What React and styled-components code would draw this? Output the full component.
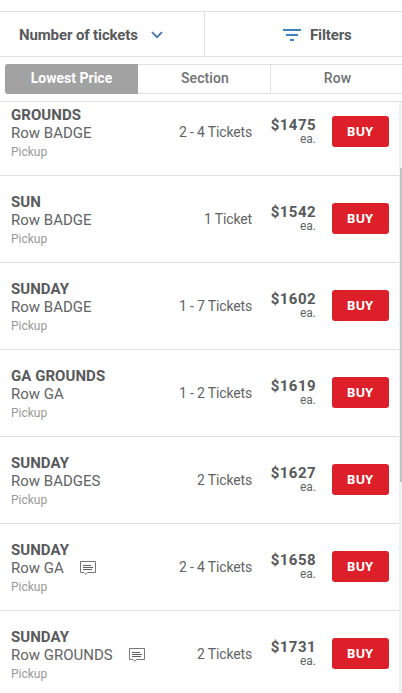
import React, { useState } from 'react';

import styled, { createGlobalStyle } from 'styled-components';


const GlobalStyle = createGlobalStyle`
  * {
    box-sizing: border-box;
  }

  body {
    margin: 0;
    background: #fff;
    font-family: Roboto, sans-serif;
    color: #626365;
    overflow: hidden;
  }
`;

const Page = styled.div`
  height: 693px;
  padding-top: 11px;
  display: flex;
  flex-direction: column;
  overflow: hidden;
`;

const Toolbar = styled.div`
  display: flex;
  flex: none;
  height: 46px;
  border-top: 1px solid #e0e0e0;
  border-bottom: 1px solid #e0e0e0;
`;

const ToolbarButton = styled.button`
  display: flex;
  align-items: center;
  flex: ${(props) => (props.$wide ? '0 0 205px' : '1')};
  gap: ${(props) => (props.$wide ? '13px' : '9px')};
  padding: 2px 0 0 ${(props) => (props.$wide ? '19px' : '78px')};
  border: none;
  border-right: ${(props) => (props.$wide ? '1px solid #e0e0e0' : 'none')};
  background: none;
  color: #58595c;
  font: 700 15px/20px Roboto, sans-serif;
  letter-spacing: -0.12px;
  cursor: pointer;
`;

const Tabs = styled.div`
  display: flex;
  flex: none;
  height: 30px;
  margin: 7px 0 7px 5px;
  border: 1px solid #e0e0e0;
  border-right: none;
  border-radius: 3px 0 0 3px;
`;

const Tab = styled.button`
  flex: 0 0 ${(props) => (props.$active ? '133px' : '132px')};
  margin: ${(props) => (props.$active ? '-1px 0 -1px -1px' : '0')};
  padding: 0 0 2px ${(props) => (props.$active ? '0' : '2px')};
  border: none;
  border-left: ${(props) => (props.$line ? '1px solid #e0e0e0' : 'none')};
  border-radius: ${(props) => (props.$active ? '3px 0 0 3px' : '0')};
  background: ${(props) => (props.$active ? '#a2a2a2' : '#fff')};
  color: ${(props) => (props.$active ? '#fff' : '#707173')};
  font: ${(props) => (props.$active ? 700 : 500)} 14px/20px Roboto, sans-serif;
  letter-spacing: ${(props) => (props.$active ? '0' : '0.1px')};
  cursor: pointer;
`;

const ListArea = styled.div`
  display: flex;
  flex: 1;
  min-height: 0;
  border-top: 1px solid #e0e0e0;
`;

const ListClip = styled.div`
  flex: 1;
  overflow: hidden;
`;

const List = styled.div`
  display: flex;
  flex-direction: column;
  margin-top: -13px;
`;

const ScrollTrack = styled.div`
  width: 3px;
  padding: 66px 0 0 1px;
  background: #f1f1f1;
`;

const ScrollThumb = styled.div`
  height: 314px;
  background: #c1c1c1;
`;

const Listing = styled.div`
  display: flex;
  flex: none;
  height: 87px;
  padding-left: 11px;
  border-bottom: 1px solid #e0e0e0;
`;

const Seat = styled.div`
  flex: 1;
  padding-top: 17px;
`;

const Section = styled.div`
  color: #58595b;
  font-size: 15px;
  font-weight: 700;
  line-height: 18px;
  letter-spacing: 0.05px;
`;

const RowName = styled.div`
  display: flex;
  align-items: center;
  gap: 16px;
  font-size: 15px;
  line-height: 18px;
`;

const Delivery = styled.div`
  margin-top: 2px;
  color: #999;
  font-size: 12px;
  line-height: 16px;
`;

const Quantity = styled.div`
  padding-top: 34px;
  font-size: 14px;
  line-height: 18px;
  letter-spacing: -0.15px;
`;

const Price = styled.div`
  width: 64px;
  padding-top: 27px;
  text-align: right;
`;

const Amount = styled.div`
  color: #58595b;
  font-size: 15px;
  font-weight: 700;
  line-height: 18px;
  letter-spacing: 0.45px;
`;

const Each = styled.div`
  font-size: 12px;
  line-height: 10px;
`;

const BuyButton = styled.button`
  width: 57px;
  height: 31px;
  margin: 27px 10px 0 16px;
  padding: 0 1px 2px 0;
  border: none;
  border-radius: 3px;
  background: #dc1f28;
  color: #fff;
  font: 700 13px/18px 'Noto Sans', sans-serif;
  letter-spacing: -0.1px;
  cursor: pointer;
`;


const ChevronIcon = () => (
  <svg width="12" height="8" viewBox="0 0 12 8" fill="none" stroke="#4a78ae" strokeWidth="1.9">
    <path d="M1 1.2L6 6.2L11 1.2" />
  </svg>
);

const FilterIcon = () => (
  <svg width="18" height="12" viewBox="0 0 18 12" fill="#3f7fc1">
    <rect x="0" y="0" width="18" height="2" />
    <rect x="3" y="5" width="12" height="2" />
    <rect x="7" y="10" width="4" height="2" />
  </svg>
);

const NoteIcon = () => (
  <svg width="16" height="14" viewBox="0 0 16 14" fill="none" stroke="#77777b">
    <path d="M0.5 0.5H15.5V11.5H7.5L5.5 13.3L4 11.5H0.5Z" />
    <path d="M3 4.5H11M3 6.5H13M3 8.5H12" stroke="#606064" />
  </svg>
);


const listings = [
  { id: 1, section: 'GROUNDS', row: 'BADGE', tickets: '2 - 4 Tickets', price: 1475 },
  { id: 2, section: 'SUN', row: 'BADGE', tickets: '1 Ticket', price: 1542 },
  { id: 3, section: 'SUNDAY', row: 'BADGE', tickets: '1 - 7 Tickets', price: 1602 },
  { id: 4, section: 'GA GROUNDS', row: 'GA', tickets: '1 - 2 Tickets', price: 1619 },
  { id: 5, section: 'SUNDAY', row: 'BADGES', tickets: '2 Tickets', price: 1627 },
  { id: 6, section: 'SUNDAY', row: 'GA', tickets: '2 - 4 Tickets', price: 1658, note: true },
  { id: 7, section: 'SUNDAY', row: 'GROUNDS', tickets: '2 Tickets', price: 1731, note: true },
];

const tabs = ['Lowest Price', 'Section', 'Row'];


const App = () => {
  const [activeTab, setActiveTab] = useState('Lowest Price');

  return (
    <Page>
      <GlobalStyle />

      <Toolbar>
        <ToolbarButton $wide>
          Number of tickets
          <ChevronIcon />
        </ToolbarButton>
        <ToolbarButton>
          <FilterIcon />
          Filters
        </ToolbarButton>
      </Toolbar>

      {/* Sort order */}
      <Tabs>
        {tabs.map((tab, index) => (
          <Tab
            key={tab}
            $active={tab === activeTab}
            $line={index === 2}
            onClick={() => setActiveTab(tab)}
          >
            {tab}
          </Tab>
        ))}
      </Tabs>

      <ListArea>
        <ListClip>
          <List>
            {listings.map((item) => (
              <Listing key={item.id}>
                <Seat>
                  <Section>{item.section}</Section>
                  <RowName>
                    Row {item.row}
                    {item.note && <NoteIcon />}
                  </RowName>
                  <Delivery>Pickup</Delivery>
                </Seat>
                <Quantity>{item.tickets}</Quantity>
                <Price>
                  <Amount>${item.price}</Amount>
                  <Each>ea.</Each>
                </Price>
                <BuyButton>BUY</BuyButton>
              </Listing>
            ))}
          </List>
        </ListClip>
        <ScrollTrack>
          <ScrollThumb />
        </ScrollTrack>
      </ListArea>
    </Page>
  );
};


export default App;
